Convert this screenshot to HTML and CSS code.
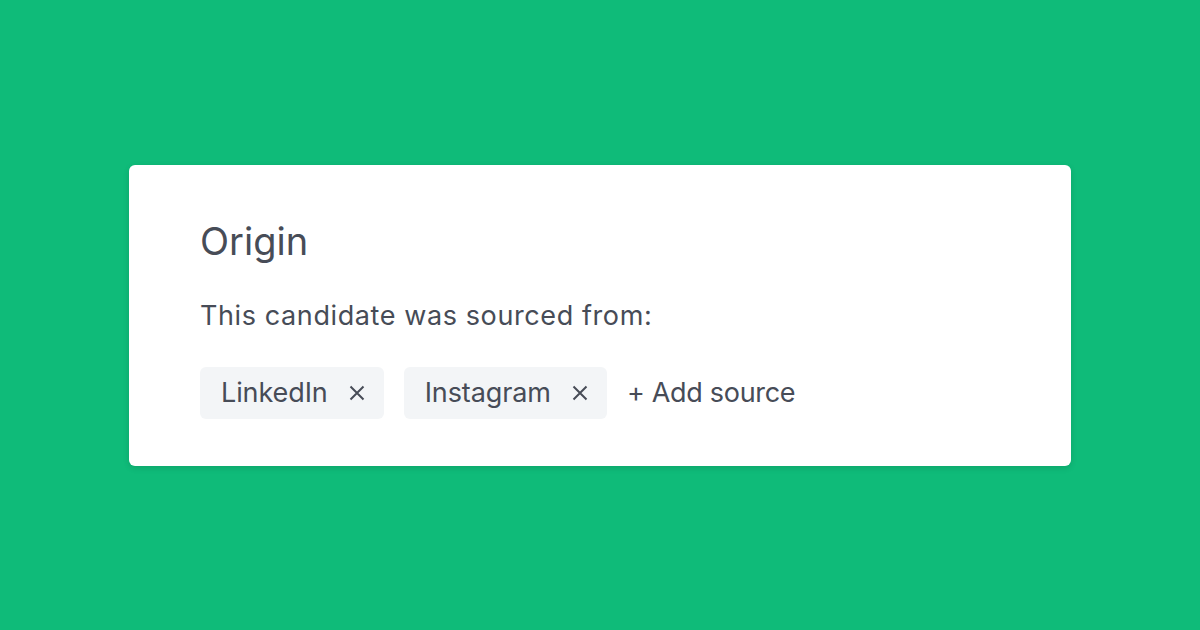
FILE: index.html
```html
<!DOCTYPE html>
<html>
<head>
<meta charset="utf-8">
<link rel="stylesheet" href="styles.css">
</head>
<body>
<div class="page">
  <div class="card">
    <h1 class="title">Origin</h1>
    <p class="lead">This candidate was sourced from:</p>
    <div class="chips">
      <span class="chip">LinkedIn <svg class="x" viewBox="0 0 18 18"><path d="M2.5 2.5L15.5 15.5M15.5 2.5L2.5 15.5"/></svg></span>
      <span class="chip">Instagram <svg class="x" viewBox="0 0 18 18"><path d="M2.5 2.5L15.5 15.5M15.5 2.5L2.5 15.5"/></svg></span>
      <span class="add">+ Add source</span>
    </div>
  </div>
</div>
</body>
</html>
```
FILE: styles.css
```css
html, body { margin: 0; padding: 0; }
body { width: 1200px; height: 630px; background: #0fbb79; font-family: Inter, "Noto Sans", sans-serif; color: #474c57; }
.page { height: 630px; display: flex; align-items: center; justify-content: center; }
.card { width: 942px; height: 301px; box-sizing: border-box; background: #fff; border-radius: 6px; box-shadow: 0 2px 6px rgba(0,0,0,0.12); padding: 52px 71px 0; }
.title { margin: 0; font-size: 38px; font-weight: 400; line-height: 48px; }
.lead { margin: 35px 0 0; font-size: 27px; line-height: 32px; letter-spacing: 0.6px; }
.chips { display: flex; align-items: center; gap: 20px; margin-top: 35px; }
.chip { display: flex; align-items: center; gap: 20px; height: 52px; padding: 0 18px 0 21px; background: #f3f5f7; border-radius: 6px; font-size: 27px; letter-spacing: -0.1px; }
.x { width: 18px; height: 18px; stroke: #474c57; stroke-width: 2; fill: none; }
.add { font-size: 27px; letter-spacing: -0.3px; }
```
